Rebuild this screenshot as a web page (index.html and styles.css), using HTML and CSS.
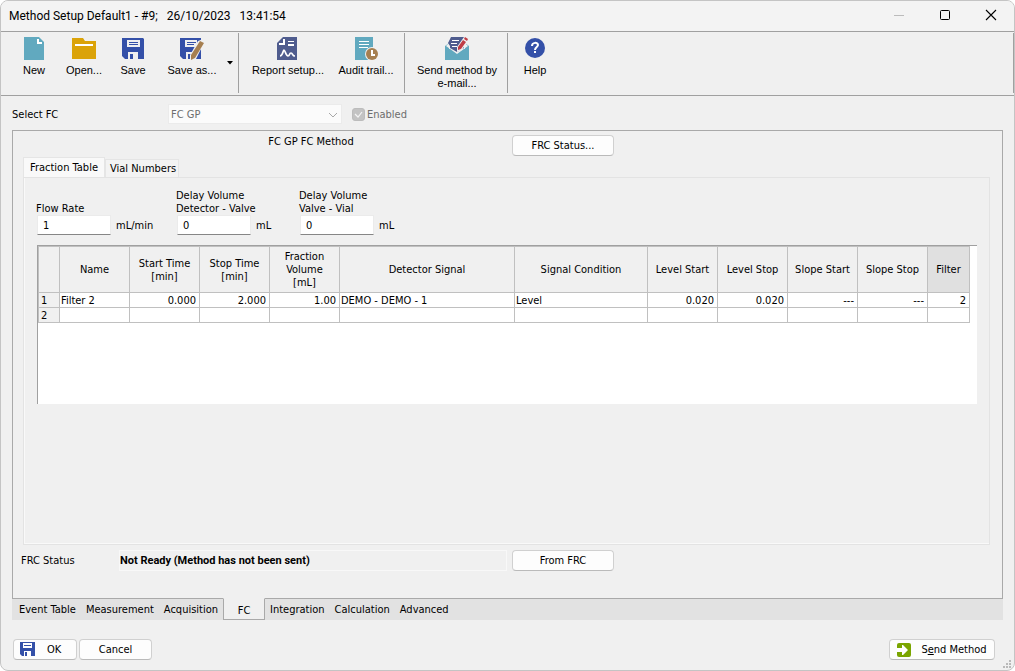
FILE: index.html
```html
<!DOCTYPE html>
<html lang="en">
<head>
    <meta charset="UTF-8">
    <meta name="viewport" content="width=device-width, initial-scale=1.0">
    <title>Method Setup</title>
    <link rel="stylesheet" href="styles.css">
</head>
<body>
<div class="window">
    <header class="titlebar">
        <h1>Method Setup Default1 - #9; &nbsp; 26/10/2023 &nbsp; 13:41:54</h1>
        <div class="winbtns">
            <button type="button" disabled aria-label="Minimize"><svg width="12" height="12"><path d="M1 6.500h10" stroke="#bbb"/></svg></button>
            <button type="button" aria-label="Maximize"><svg width="12" height="12"><rect x="1.500" y="1.500" width="9" height="9" rx="1" fill="none" stroke="#000"/></svg></button>
            <button type="button" aria-label="Close"><svg width="12" height="12"><path d="M1 1l10 10M11 1L1 11" stroke="#000" stroke-width="1.100"/></svg></button>
        </div>
    </header>

    <nav class="toolbar">
        <div class="group first">
            <button type="button" class="tool">
                <svg width="24" height="24"><path d="M2 0h15l5 5v18H2z" fill="#61a9bf"/><path d="M15 2v5h5V5h-3V2z" fill="#fff"/></svg>
                New
            </button>
            <button type="button" class="tool">
                <svg width="24" height="24"><path d="M0 1h11l2 3h11v18H0z" fill="#dba309"/><path d="M3 7h18v2H3z" fill="#fff"/></svg>
                Open...
            </button>
            <button type="button" class="tool save">
                <svg width="24" height="24"><path d="M1 1h21l1 1v20H4l-3-3z" fill="#3450a8"/><path d="M6 3h13v7H6zM7 15h10v7H7z" fill="#f0f0f0"/><path d="M8 5h9v1H8zM8 7h9v1H8zM9 17h3v5H9z" fill="#3450a8"/></svg>
                Save
            </button>
            <button type="button" class="tool saveas">
                <svg width="24" height="24"><path d="M0 1h21v21H3l-3-3z" fill="#3450a8"/><path d="M5 3h12v7H5zM6 15h10v7H6z" fill="#f0f0f0"/><path d="M7 5h9v1H7zM7 7h7v1H7zM8 17h3v5H8z" fill="#3450a8"/><path d="M18 4l5-2 1 4-8 16-6 2v-6z" fill="#f0f0f0"/><path d="M20 4l4 2-9 15-4 2v-5z" fill="#a67f50"/></svg>
                Save as...
            </button>
            <button type="button" class="more" aria-label="More save options"><svg width="6" height="4"><path d="M0 0h6L3 3.500z"/></svg></button>
        </div>
        <div class="group second">
            <button type="button" class="tool report">
                <svg width="24" height="24"><path d="M7 0h14v23H1V6z" fill="#4f5c8e"/><path d="M7 2h2v6H3V6h4zM12 4h6v1h-6zM12 7h6v2h-6z" fill="#fff"/><path d="M4 19c3 0 3-6 4-6s2 6 4 6 1-3 3-3 1 3 4 3" fill="none" stroke="#fff" stroke-width="1.700"/></svg>
                Report setup...
            </button>
            <button type="button" class="tool audit">
                <svg width="24" height="24"><path d="M1 0h18v23H1z" fill="#61a9bf"/><path d="M5 4h10v1H5zM5 7h10v1H5zM5 10h9v1H5z" fill="#fff"/><circle cx="18" cy="17" r="7" fill="#f0f0f0"/><circle cx="18" cy="17" r="6" fill="#a67f50"/><path d="M18 13v5h3" fill="none" stroke="#fff" stroke-width="2"/></svg>
                Audit trail...
            </button>
        </div>
        <div class="group third">
            <button type="button" class="tool mail">
                <svg width="24" height="24"><path d="M0 9l4-3v6h16V6l4 3v14H0z" fill="#61a9bf"/><path d="M1 9l3-3h16l3 3-11 8z" fill="#f0f0f0"/><path d="M6 0h13v11l-7 4-7-4V9L3 6z" fill="#4f5c8e"/><path d="M7 3h7v1H7zM6 6h6v1H6zM7 9h5v1H7z" fill="#fff"/><path d="M19 0l5 1-7 12-5 2v-5z" fill="#f0f0f0"/><path d="M20 0l3 2-1 2-3-2zM18 3l3 2-5 7-3 1v-3z" fill="#c03d45"/></svg>
                Send method by<br>e-mail...
            </button>
        </div>
        <div class="group last">
            <button type="button" class="tool">
                <svg width="24" height="24"><circle cx="12" cy="11" r="10" fill="#3450a8"/><path d="M9 9c0-4 6-4 6-1 0 2-3 2-3 5" fill="none" stroke="#fff" stroke-width="2"/><path d="M11 14h2v2h-2z" fill="#fff"/></svg>
                Help
            </button>
        </div>
    </nav>

    <main class="content">
        <div class="selectrow">
            <label for="fc">Select FC</label>
            <div class="combo">
                <select id="fc" disabled><option>FC GP</option></select>
                <svg class="arrow" width="10" height="6"><path d="M1 1l4 4 4-4" fill="none" stroke="#a8a8a8"/></svg>
            </div>
            <label class="check">
                <input type="checkbox" checked disabled>
                <svg class="tick" width="13" height="13"><path d="M3 6l3 3 4-5" fill="none" stroke="#f4f4f4" stroke-width="1.200"/></svg>
                Enabled
            </label>
        </div>

        <section class="panel">
            <div class="methodrow">
                <h2>FC GP FC Method</h2>
                <button type="button" class="btn">FRC Status...</button>
            </div>

            <div class="tabs">
                <button type="button" class="tab active">Fraction Table</button>
                <button type="button" class="tab">Vial Numbers</button>
            </div>
            <div class="page">
                <div class="fields">
                    <div class="field">
                        <label for="flow">Flow Rate</label>
                        <div><input id="flow" type="text" value="1"><span>mL/min</span></div>
                    </div>
                    <div class="field">
                        <label for="delay1">Delay Volume<br>Detector - Valve</label>
                        <div><input id="delay1" type="text" value="0"><span>mL</span></div>
                    </div>
                    <div class="field">
                        <label for="delay2">Delay Volume<br>Valve - Vial</label>
                        <div><input id="delay2" type="text" value="0"><span>mL</span></div>
                    </div>
                </div>

                <div class="sheet">
                    <table>
                        <colgroup>
                            <col class="c-num"><col class="c-std"><col class="c-std"><col class="c-std"><col class="c-std">
                            <col class="c-signal"><col class="c-cond"><col class="c-std"><col class="c-std"><col class="c-std"><col class="c-std"><col class="c-filter">
                        </colgroup>
                        <thead>
                            <tr>
                                <th></th>
                                <th>Name</th>
                                <th>Start Time<br>[min]</th>
                                <th>Stop Time<br>[min]</th>
                                <th>Fraction<br>Volume<br>[mL]</th>
                                <th>Detector Signal</th>
                                <th>Signal Condition</th>
                                <th>Level Start</th>
                                <th>Level Stop</th>
                                <th>Slope Start</th>
                                <th>Slope Stop</th>
                                <th class="current">Filter</th>
                            </tr>
                        </thead>
                        <tbody>
                            <tr>
                                <th>1</th>
                                <td>Filter 2</td>
                                <td class="num">0.000</td>
                                <td class="num">2.000</td>
                                <td class="num">1.00</td>
                                <td>DEMO - DEMO - 1</td>
                                <td>Level</td>
                                <td class="num">0.020</td>
                                <td class="num">0.020</td>
                                <td class="num">---</td>
                                <td class="num">---</td>
                                <td class="num">2</td>
                            </tr>
                            <tr>
                                <th>2</th>
                                <td></td><td></td><td></td><td></td><td></td><td></td><td></td><td></td><td></td><td></td><td></td>
                            </tr>
                        </tbody>
                    </table>
                </div>
            </div>

            <div class="statusrow">
                <label for="status">FRC Status</label>
                <input id="status" type="text" value="Not Ready (Method has not been sent)" readonly>
                <button type="button" class="btn">From FRC</button>
            </div>
        </section>

        <nav class="sections">
            <a href="#">Event Table</a>
            <a href="#">Measurement</a>
            <a href="#">Acquisition</a>
            <a href="#" class="active">FC</a>
            <a href="#">Integration</a>
            <a href="#">Calculation</a>
            <a href="#">Advanced</a>
        </nav>
    </main>

    <footer class="footer">
        <button type="button" class="btn ok">
            <svg width="15" height="15"><path d="M0 0h15v14H2l-2-2z" fill="#3450a8"/><path d="M3 1h9v5H3zM4 9h7v5H4z" fill="#fff"/><path d="M4 3h7v1H4zM5 10h2v4H5z" fill="#3450a8"/></svg>
            <span>OK</span>
        </button>
        <button type="button" class="btn cancel">Cancel</button>
        <button type="button" class="btn send">
            <svg width="14" height="14"><rect width="14" height="14" rx="2" fill="#7aa500"/><path d="M0 5h5V2l1 0 5 5-5 5H5V9H0z" fill="#fff"/></svg>
            <span>S<u>e</u>nd Method</span>
        </button>
    </footer>
    <svg class="grip" width="8" height="8"><path d="M6 0h2v2H6zM3 3h2v2H3zM6 3h2v2H6zM0 6h2v2H0zM3 6h2v2H3zM6 6h2v2H6z" fill="#b9b9b9"/></svg>
</div>
</body>
</html>
```
FILE: styles.css
```css
*{
    box-sizing: border-box;
}
body,h1,h2{
    margin: 0;
    font-weight: normal;
}
body{
    background: #fff;
    color: #000;
    font: 11px/13px "DejaVu Sans Condensed", "Noto Sans", sans-serif;
}
h2{
    font-size: 11px;
}
button,input,select{
    font: inherit;
    color: inherit;
    margin: 0;
    padding: 0;
}
button{
    border: 0;
    background: none;
    white-space: nowrap;
}
svg{
    display: block;
    flex: none;
}

.window{
    position: relative;
    min-height: 100vh;
    display: flex;
    flex-direction: column;
    border: 1px solid #c4c4c4;
    border-radius: 8px;
    background: #f0f0f0;
    overflow: hidden;
}

/* title bar */
.titlebar{
    display: flex;
    justify-content: space-between;
    height: 31px;
    padding-left: 8px;
    background: #f3f3f3;
    border-bottom: 1px solid #a0a0a0;
}
.titlebar h1{
    font: 12px/30px Roboto, "Noto Sans", sans-serif;
}
.winbtns{
    display: flex;
}
.winbtns button{
    width: 46px;
    display: flex;
    justify-content: center;
    padding-top: 8px;
}

/* toolbar */
.toolbar{
    display: flex;
    height: 64px;
    padding: 1px 0 2px;
    border-bottom: 1px solid #a0a0a0;
    font: 11px/13px "Liberation Sans", Arial, sans-serif;
}
.group{
    display: flex;
    border-right: 1px solid #a0a0a0;
}
.first{
    padding-left: 8px;
    width: 238px;
}
.second{
    width: 166px;
    padding-left: 9px;
}
.third{
    width: 103px;
    padding-left: 2px;
}
.last{
    flex: 1;
}
.tool{
    display: flex;
    flex-direction: column;
    align-items: center;
    width: 50px;
    padding-top: 4px;
}
.tool svg{
    margin-bottom: 3px;
}
.save{
    width: 48px;
}
.saveas{
    width: 70px;
}
.report{
    width: 80px;
}
.audit{
    width: 76px;
}
.mail{
    width: 100px;
}
.last .tool{
    width: 54px;
}
.more{
    display: flex;
    align-items: center;
}

/* content */
.content{
    flex: 1;
    display: flex;
    flex-direction: column;
    padding: 8px 11px 0;
}
.selectrow{
    display: flex;
    align-items: center;
    height: 20px;
    margin-bottom: 6px;
}
.selectrow > label:first-child{
    width: 156px;
}
.combo{
    position: relative;
    width: 174px;
}
.combo select{
    appearance: none;
    width: 100%;
    height: 20px;
    padding-left: 2px;
    border: 1px solid #ebebeb;
    background: #fbfbfb;
    color: #6d6d6d;
    opacity: 1;
}
.arrow{
    position: absolute;
    right: 4px;
    top: 8px;
}
.check{
    position: relative;
    display: flex;
    align-items: center;
    gap: 2px;
    margin-left: 10px;
    color: #6d6d6d;
}
.check input{
    appearance: none;
    width: 13px;
    height: 13px;
    border: 1px solid #bcbcbc;
    border-radius: 3px;
    background: #c3c3c3;
}
.tick{
    position: absolute;
    left: 0;
    top: 0;
}
.btn{
    width: 102px;
    height: 21px;
    border: 1px solid #d0d0d0;
    border-bottom-color: #bababa;
    border-radius: 4px;
    background: #fdfdfd;
}
.panel{
    flex: 1;
    display: flex;
    flex-direction: column;
    padding: 4px 12px 27px 10px;
    border: 1px solid #a9a9a9;
}
.methodrow{
    display: grid;
    grid-template-columns: 489px 102px;
    align-items: start;
}
.methodrow h2{
    padding-left: 87px;
    text-align: center;
}

/* inner tabs */
.tabs{
    display: flex;
    align-items: flex-end;
    margin-top: 1px;
}
.tab{
    height: 18px;
    padding: 0 2px 0 4px;
    border: 1px solid #e5e5e5;
    border-bottom: 0;
    background: #f3f3f3;
}
.tab.active{
    height: 20px;
    padding: 0 6px;
    background: #f9f9f9;
}
.page{
    flex: 1;
    padding: 11px 12px 0;
    border: 1px solid #e3e3e3;
    box-shadow: inset 1px 0 #f9f9f9, inset 0 -1px #f9f9f9;
}
.fields{
    display: grid;
    grid-template-columns: 140px 123px auto;
    align-items: end;
}
.field div{
    display: flex;
    align-items: center;
    padding-left: 1px;
}
.field label{
    display: block;
}
.field input{
    width: 74px;
    height: 20px;
    margin-right: 5px;
    padding-left: 5px;
    border: 1px solid #ebebeb;
    border-bottom-color: #868686;
    background: #fff;
}

/* fraction table */
.sheet{
    height: 159px;
    margin: 10px 0 0 1px;
    border-top: 1px solid #a0a0a0;
    border-left: 1px solid #a0a0a0;
    background: #fff;
}
.sheet table{
    width: 932px;
    table-layout: fixed;
    border-collapse: collapse;
}
.c-num{
    width: 21px;
}
.c-std{
    width: 70px;
}
.c-signal{
    width: 175px;
}
.c-cond{
    width: 133px;
}
.c-filter{
    width: 42px;
}
.sheet th,.sheet td{
    height: 15px;
    padding: 0 1px;
    border: 1px solid #c0c0c0;
    white-space: nowrap;
    text-align: left;
}
.sheet th{
    font-weight: normal;
    background: #f0f0f0;
}
.sheet thead th{
    height: 46px;
    text-align: center;
}
.sheet thead .current{
    background: #e0e0e0;
}
.sheet tbody th{
    padding-left: 2px;
}
.sheet .num{
    padding-right: 3px;
    text-align: right;
}

.statusrow{
    display: grid;
    grid-template-columns: 96px 388px 102px;
    align-items: center;
    margin-top: 5px;
}
.statusrow label{
    margin-left: -2px;
}
.statusrow input{
    height: 21px;
    width: 100%;
    border: 1px solid #f8f8f8;
    background: #f0f0f0;
    font-family: Roboto, "Noto Sans", sans-serif;
    font-weight: bold;
}
.statusrow .btn{
    margin-left: 5px;
}

/* bottom tabs */
.sections{
    display: flex;
    height: 21px;
    padding-left: 2px;
    background: #e2e2e2;
}
.sections a{
    padding: 4px 5px;
    color: #000;
    text-decoration: none;
}
.sections .active{
    width: 42px;
    margin-top: -1px;
    padding: 5px 0 0;
    border: 1px solid #a9a9a9;
    border-top-color: #f0f0f0;
    background: #f0f0f0;
    text-align: center;
}

/* footer */
.footer{
    display: flex;
    gap: 2px;
    padding: 19px 19px 10px 12px;
}
.footer .btn{
    display: flex;
    align-items: center;
    justify-content: center;
}
.footer .ok{
    width: 64px;
    justify-content: flex-start;
    padding-left: 6px;
    gap: 12px;
}
.footer .cancel{
    width: 73px;
}
.footer .send{
    width: 106px;
    margin-left: auto;
    gap: 10px;
}
.grip{
    position: absolute;
    right: 3px;
    bottom: 2px;
}
```
